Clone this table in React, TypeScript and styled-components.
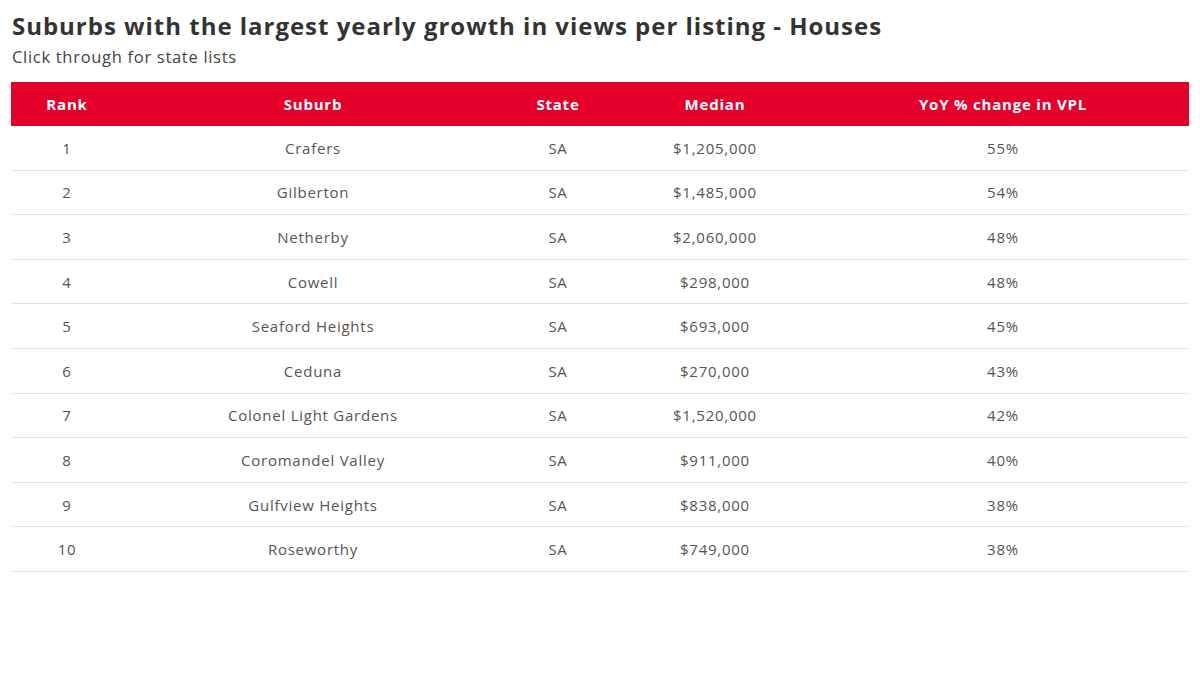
import React from "react";
import styled, { createGlobalStyle } from "styled-components";

const GlobalStyle = createGlobalStyle`
  body {
    margin: 0;
    background: #fff;
    font-family: "Open Sans", "Liberation Sans", sans-serif;
  }
`;

interface IRow {
  rank: number;
  suburb: string;
  state: string;
  median: string;
  change: string;
}

const rows: IRow[] = [
  { rank: 1, suburb: "Crafers", state: "SA", median: "$1,205,000", change: "55%" },
  { rank: 2, suburb: "Gilberton", state: "SA", median: "$1,485,000", change: "54%" },
  { rank: 3, suburb: "Netherby", state: "SA", median: "$2,060,000", change: "48%" },
  { rank: 4, suburb: "Cowell", state: "SA", median: "$298,000", change: "48%" },
  { rank: 5, suburb: "Seaford Heights", state: "SA", median: "$693,000", change: "45%" },
  { rank: 6, suburb: "Ceduna", state: "SA", median: "$270,000", change: "43%" },
  { rank: 7, suburb: "Colonel Light Gardens", state: "SA", median: "$1,520,000", change: "42%" },
  { rank: 8, suburb: "Coromandel Valley", state: "SA", median: "$911,000", change: "40%" },
  { rank: 9, suburb: "Gulfview Heights", state: "SA", median: "$838,000", change: "38%" },
  { rank: 10, suburb: "Roseworthy", state: "SA", median: "$749,000", change: "38%" },
];

const Wrapper = styled.div`
  padding: 10px 11px;
`;

const Title = styled.h1`
  margin: 0 0 0 1px;
  font-size: 24px;
  line-height: 32px;
  font-weight: 700;
  color: #333;
  letter-spacing: 0.98px;
`;

const Subtitle = styled.p`
  margin: 3px 0 13px 1px;
  font-size: 16.5px;
  line-height: 24px;
  color: #444;
  letter-spacing: 0.7px;
`;

const Table = styled.table`
  width: 100%;
  border-collapse: collapse;
  table-layout: fixed;
`;

const HeadCell = styled.th<{ $w: number }>`
  width: ${(p) => p.$w}px;
  height: 44px;
  padding: 0;
  background: #e4002b;
  color: #fff;
  font-size: 15px;
  font-weight: 700;
  letter-spacing: 0.8px;
  text-align: center;
`;

const Row = styled.tr`
  border-bottom: 1px solid #e3e3e3;
`;

const Cell = styled.td`
  height: 43.6px;
  padding: 0;
  text-align: center;
  font-size: 15px;
  color: #555;
  letter-spacing: 0.75px;
`;

const columns = [
  { label: "Rank", w: 112 },
  { label: "Suburb", w: 380 },
  { label: "State", w: 110 },
  { label: "Median", w: 204 },
  { label: "YoY % change in VPL", w: 372 },
];

const App = () => {
  return (
    <Wrapper>
      <GlobalStyle />
      <Title>Suburbs with the largest yearly growth in views per listing - Houses</Title>
      <Subtitle>Click through for state lists</Subtitle>
      <Table>
        <thead>
          <tr>
            {columns.map((c) => (
              <HeadCell key={c.label} $w={c.w}>
                {c.label}
              </HeadCell>
            ))}
          </tr>
        </thead>
        <tbody>
          {rows.map((r) => (
            <Row key={r.rank}>
              <Cell>{r.rank}</Cell>
              <Cell>{r.suburb}</Cell>
              <Cell>{r.state}</Cell>
              <Cell>{r.median}</Cell>
              <Cell>{r.change}</Cell>
            </Row>
          ))}
        </tbody>
      </Table>
    </Wrapper>
  );
};

export default App;
